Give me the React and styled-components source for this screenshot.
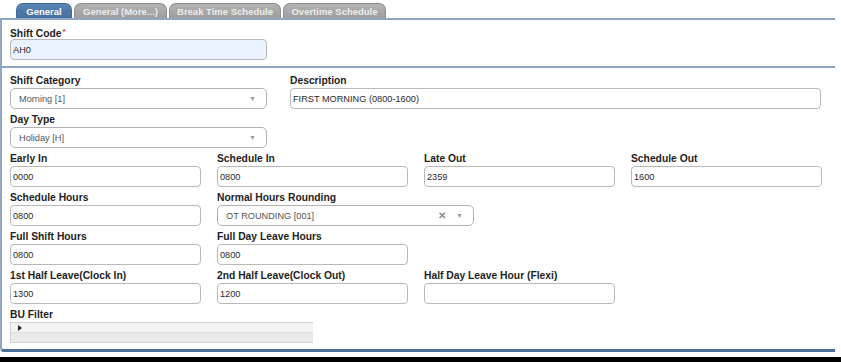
import React from "react";
import styled, { createGlobalStyle } from "styled-components";

const GlobalStyle = createGlobalStyle`
  html, body {
    margin: 0;
    padding: 0;
    background: #fff;
  }
  body {
    font-family: "Liberation Sans", Arial, sans-serif;
  }
`;

const tabs = [
  { label: "General", active: true, width: 56 },
  { label: "General (More...)", width: 93 },
  { label: "Break Time Schedule", width: 112 },
  { label: "Overtime Schedule", width: 103 },
];

const App = () => {
  return (
    <Page>
      <GlobalStyle />
      <TabBar>
        {tabs.map((t) => (
          <Tab key={t.label} $active={t.active} $width={t.width}>
            {t.label}
          </Tab>
        ))}
      </TabBar>
      <Panel>
        <TopSection>
          <Field $width={257}>
            <Label>
              Shift Code<Req>*</Req>
            </Label>
            <TextInput $tint>AH0</TextInput>
          </Field>
        </TopSection>
        <FormSection>
          <Row $gap={23}>
            <Field $width={257}>
              <Label>Shift Category</Label>
              <SelectBox>
                <span>Morning [1]</span>
                <Arrow>▼</Arrow>
              </SelectBox>
            </Field>
            <Field $width={531}>
              <Label>Description</Label>
              <TextInput>FIRST MORNING (0800-1600)</TextInput>
            </Field>
          </Row>
          <Row>
            <Field $width={257}>
              <Label>Day Type</Label>
              <SelectBox>
                <span>Holiday [H]</span>
                <Arrow>▼</Arrow>
              </SelectBox>
            </Field>
          </Row>
          <Row>
            <Field>
              <Label>Early In</Label>
              <TextInput>0000</TextInput>
            </Field>
            <Field>
              <Label>Schedule In</Label>
              <TextInput>0800</TextInput>
            </Field>
            <Field>
              <Label>Late Out</Label>
              <TextInput>2359</TextInput>
            </Field>
            <Field>
              <Label>Schedule Out</Label>
              <TextInput>1600</TextInput>
            </Field>
          </Row>
          <Row>
            <Field>
              <Label>Schedule Hours</Label>
              <TextInput>0800</TextInput>
            </Field>
            <Field $width={257}>
              <Label>Normal Hours Rounding</Label>
              <SelectBox>
                <span>OT ROUNDING [001]</span>
                <Clear>✕</Clear>
                <Arrow>▼</Arrow>
              </SelectBox>
            </Field>
          </Row>
          <Row>
            <Field>
              <Label>Full Shift Hours</Label>
              <TextInput>0800</TextInput>
            </Field>
            <Field>
              <Label>Full Day Leave Hours</Label>
              <TextInput>0800</TextInput>
            </Field>
          </Row>
          <Row>
            <Field>
              <Label>1st Half Leave(Clock In)</Label>
              <TextInput>1300</TextInput>
            </Field>
            <Field>
              <Label>2nd Half Leave(Clock Out)</Label>
              <TextInput>1200</TextInput>
            </Field>
            <Field>
              <Label>Half Day Leave Hour (Flexi)</Label>
              <TextInput />
            </Field>
          </Row>
          <Field $width={303}>
            <Label>BU Filter</Label>
            <TreeBox>
              <TreeHead>
                <Caret />
              </TreeHead>
              <TreeBody />
            </TreeBox>
          </Field>
        </FormSection>
      </Panel>
      <BottomBar />
    </Page>
  );
};

const Page = styled.div`
  width: 841px;
  height: 362px;
  display: flex;
  flex-direction: column;
  overflow: hidden;
`;

const TabBar = styled.div`
  display: flex;
  gap: 2px;
  height: 15px;
  padding: 3px 0 0 16px;
`;

const Tab = styled.div`
  width: ${(p) => p.$width}px;
  height: 15px;
  box-sizing: border-box;
  display: flex;
  align-items: center;
  justify-content: center;
  border-radius: 7px 7px 0 0;
  border: 1px solid ${(p) => (p.$active ? "#3e6794" : "#8e8e8e")};
  border-bottom: none;
  background: ${(p) =>
    p.$active
      ? "linear-gradient(#5a86b6, #43709f)"
      : "linear-gradient(#b4b4b4, #9e9e9e)"};
  color: ${(p) => (p.$active ? "#fff" : "#ececec")};
  font-size: 9.5px;
  font-weight: bold;
  white-space: nowrap;
`;

const Panel = styled.div`
  width: 833px;
  height: 329px;
  box-sizing: content-box;
  border-left: 2px solid #8ea6c4;
  border-top: 2px solid #8ea6c4;
  border-bottom: 3px solid #4b709c;
  border-bottom-left-radius: 4px;
  display: flex;
  flex-direction: column;
`;

const TopSection = styled.div`
  padding: 5px 8px 2px;
  border-bottom: 2px solid #8ea6c4;
`;

const FormSection = styled.div`
  padding: 6px 8px 0;
  display: flex;
  flex-direction: column;
`;

const Row = styled.div`
  display: flex;
  gap: ${(p) => p.$gap ?? 16}px;
`;

const Field = styled.div`
  width: ${(p) => p.$width ?? 191}px;
  display: flex;
  flex-direction: column;
  padding-bottom: 4px;
`;

const Label = styled.div`
  height: 13px;
  line-height: 13px;
  margin-bottom: 1px;
  font-size: 10.3px;
  font-weight: bold;
  color: #1e1e1e;
  white-space: nowrap;
`;

const Req = styled.span`
  color: #e0201a;
  font-size: 8px;
  vertical-align: 3px;
  margin-left: 1px;
`;

const TextInput = styled.div`
  height: 21px;
  box-sizing: border-box;
  border: 1px solid #b9b9b9;
  border-radius: 4px;
  background: ${(p) => (p.$tint ? "#eaf3fd" : "#fff")};
  padding: 0 2px;
  display: flex;
  align-items: center;
  font-size: 9.2px;
  color: #2a2a2a;
  white-space: nowrap;
`;

const SelectBox = styled.div`
  height: 21px;
  box-sizing: border-box;
  border: 1px solid #b3b3b3;
  border-radius: 5px;
  background: #fff;
  padding: 0 8px 0 8px;
  display: flex;
  align-items: center;
  gap: 10px;
  font-size: 9.2px;
  color: #555;

  span {
    flex: 1;
  }
`;

const Arrow = styled.i`
  font-style: normal;
  font-size: 7px;
  color: #9a9a9a;
  margin-right: 2px;
`;

const Clear = styled.i`
  font-style: normal;
  font-size: 10px;
  font-weight: bold;
  color: #8c8c8c;
`;

const TreeBox = styled.div`
  height: 21px;
  box-sizing: border-box;
  border: 1px solid #d2d2d2;
  border-right: none;
  display: flex;
  flex-direction: column;
`;

const TreeHead = styled.div`
  height: 9px;
  background: #f3f3f3;
  display: flex;
  align-items: center;
  padding-left: 7px;
`;

const TreeBody = styled.div`
  flex: 1;
  background: #e9e9e9;
  border-top: 1px solid #dedede;
`;

const Caret = styled.div`
  width: 0;
  height: 0;
  border-top: 3px solid transparent;
  border-bottom: 3px solid transparent;
  border-left: 4px solid #222;
`;

const BottomBar = styled.div`
  margin-top: 5px;
  flex: 1;
  background: #000;
`;

export default App;
